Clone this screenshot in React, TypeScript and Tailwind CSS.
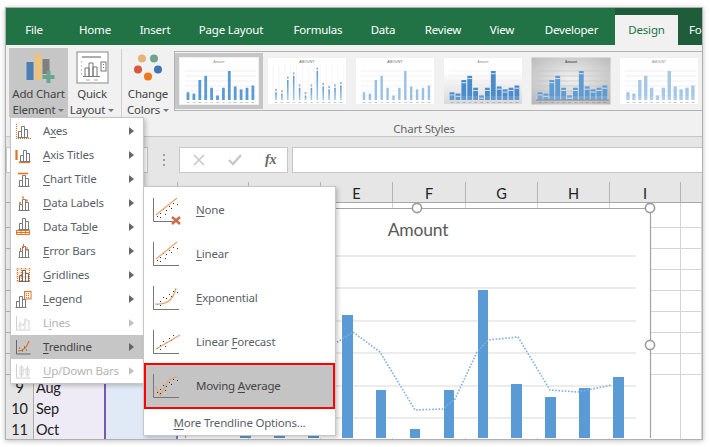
import React from "react";

const ORANGE = "#e8701f";
const GREY = "#7a7a7a";
const MONTHS = ["Jan", "Feb", "Mar", "Apr", "May", "Jun", "Jul", "Aug", "Sep", "Oct", "Nov", "Dec"];
const DATA = [24, 20, 62, 75, 38, 14, 38, 90, 42, 33, 38, 45];

function Bars({ c = GREY }: { c?: string }) {
  return <path d="M3.5 14.5V8.5h3v6M6.5 8.5V3.5h3v11M9.5 6.5h3v8M2.5 14.5h11" fill="none" stroke={c} strokeWidth="1" />;
}

function MenuIcon({ name, disabled }: { name: string; disabled?: boolean }) {
  const inner: Record<string, React.ReactNode> = {
    axes: (
      <>
        <Bars />
        <path d="M1.5 1v14M1 15.5h15" stroke={ORANGE} strokeWidth="1.2" strokeDasharray="1 1" fill="none" />
      </>
    ),
    titles: (
      <>
        <g transform="translate(2 0)"><Bars /></g>
        <path d="M1.5 3v10" stroke={ORANGE} strokeWidth="2.2" />
        <path d="M4 15.5h11" stroke={ORANGE} strokeWidth="1.2" />
      </>
    ),
    title: (
      <>
        <g transform="translate(1 1)"><Bars /></g>
        <path d="M3 2.5h10" stroke={ORANGE} strokeWidth="1.6" />
      </>
    ),
    labels: (
      <>
        <g transform="translate(1 1)"><Bars /></g>
        <path d="M5 7v2M8 1.5v2M12 4.5v2" stroke={ORANGE} strokeWidth="1.6" />
      </>
    ),
    table: (
      <>
        <g transform="translate(1 -4)"><Bars /></g>
        <path d="M1.5 11.5h13v4h-13zM1.5 13.5h13M6 11.5v4M10.5 11.5v4" fill="none" stroke={ORANGE} strokeWidth="1" />
      </>
    ),
    error: (
      <>
        <g transform="translate(1 0)"><Bars /></g>
        <path d="M5.5 5v4M8.5 1v4M12 4v4" stroke={ORANGE} strokeWidth="1" />
      </>
    ),
    grid: (
      <>
        <path d="M1.5 2h13M1.5 6h13M1.5 10h13M1.5 14h13M2.5 1v14M6.5 1v14M10.5 1v14M14.5 1v14" stroke={ORANGE} strokeWidth="1" strokeDasharray="1 1" fill="none" />
        <g transform="translate(1 0)"><Bars c="#6a6a6a" /></g>
      </>
    ),
    legend: (
      <>
        <g transform="translate(-2 2)"><Bars /></g>
        <rect x="9.5" y="0.5" width="6.5" height="7.5" fill="#fff" stroke={ORANGE} />
        <path d="M11 2.5h3.5M11 4.5h3.5M11 6.5h3.5" stroke={ORANGE} strokeWidth="1" strokeDasharray="1 1" />
      </>
    ),
    lines: (
      <>
        <path d="M1.5 1v14h14" fill="none" stroke="#c4c4c4" />
        <path d="M3 12l3-4 2 3 3-7 3 4M5 6v8M10 3v11M14 5v9" fill="none" stroke="#cfcfcf" />
      </>
    ),
    trend: (
      <>
        <path d="M1.5 1v14h14" fill="none" stroke="#666" />
        <path d="M3 12c6 0 9-4 11-10" fill="none" stroke={ORANGE} strokeWidth="1.2" />
        <path d="M4 9h1M7 12h1M9 8h1M11 11h1" stroke="#444" strokeDasharray="1 1" />
      </>
    ),
    updown: (
      <>
        <path d="M1.5 1v14h14" fill="none" stroke="#c4c4c4" />
        <path d="M5 4h3v8H5zM11 6h3v6h-3zM6.5 2v12M12.5 3v11M7 8l5-3" fill="none" stroke="#cfcfcf" />
      </>
    ),
  };
  return (
    <svg width="16" height="16" viewBox="0 0 16 16" className={`shrink-0 overflow-visible ${disabled ? "opacity-80" : ""}`}>
      {inner[name]}
    </svg>
  );
}

function MenuItem({ icon, pre, u, post, disabled, active }: { icon: string; pre?: string; u: string; post?: string; disabled?: boolean; active?: boolean }) {
  return (
    <div className={`h-[24px] flex items-center pl-[4px] pr-[9px] ${active ? "bg-[#c6c6c6] text-[#444]" : ""} ${disabled ? "text-[#b4b4b4]" : active ? "" : "text-[#5a5f69]"}`}>
      <MenuIcon name={icon} disabled={disabled} />
      <span className="ml-[12px] whitespace-nowrap">
        {pre}
        <u className="underline-offset-2">{u}</u>
        {post}
      </span>
      <svg width="5" height="8" viewBox="0 0 5 8" className="ml-auto">
        <path d="M0 0l5 4-5 4z" fill={disabled ? "#c0c0c0" : "#666"} />
      </svg>
    </div>
  );
}

function Dots({ pts }: { pts: number[][] }) {
  return (
    <>
      {pts.map(([x, y], i) => (
        <rect key={i} x={x} y={y} width="1" height="1" fill="#333" />
      ))}
    </>
  );
}

function TrendIcon({ kind }: { kind: string }) {
  const axis = <path d="M0.5 0v23.5H26" fill="none" stroke="#777" />;
  const dots = <Dots pts={[[4, 18], [7, 15], [10, 11], [13, 12], [16, 8], [18, 10], [20, 5], [24, 6], [7, 19], [12, 16]]} />;
  let line: React.ReactNode = null;
  if (kind === "none" || kind === "linear") line = <path d="M3 17L24 0" stroke="#e9a36f" strokeWidth="1.2" />;
  if (kind === "exp") line = <path d="M2 18c10 1 18-2 21-16" fill="none" stroke="#e9a36f" strokeWidth="1.2" />;
  if (kind === "forecast") line = <path d="M3 19L27 5" stroke="#e9a36f" strokeWidth="1.2" />;
  if (kind === "moving") line = <path d="M2 12L7.5 22L15 6.5L24 2" fill="none" stroke="#e9a36f" strokeWidth="1.2" />;
  return (
    <svg width="28" height="24" viewBox="0 0 28 24" className="shrink-0 overflow-visible">
      {axis}
      {dots}
      {line}
      {kind === "none" && <path d="M19 19l8 7M27 19l-8 7" stroke="#cf6a4a" strokeWidth="2.4" />}
    </svg>
  );
}

function TrendItem({ kind, pre, u, post, boxed }: { kind: string; pre?: string; u: string; post?: string; boxed?: boolean }) {
  return (
    <div className={`flex items-center ${boxed ? "bg-[#c4c4c4] border-2 border-[#ff0000] text-[#444] -mt-px h-[46px] pl-[7px]" : "h-[44px] pl-[9px] text-[#5a5f69]"}`}>
      <TrendIcon kind={kind} />
      <span className="ml-[15px] whitespace-nowrap">
        {pre}
        <u className="underline-offset-2">{u}</u>
        {post}
      </span>
    </div>
  );
}

function Caret() {
  return (
    <svg width="6" height="3" viewBox="0 0 6 3" className="inline-block ml-[3px] align-middle">
      <path d="M0 0h6L3 3z" fill="#777" />
    </svg>
  );
}

function ThumbChart({ v }: { v: number }) {
  const bx = (i: number) => 9 + i * 5.9;
  const base = 43;
  const wide = v >= 4;
  const titleFill = v === 5 || v === 2 || v === 3 ? "#555" : "#888";
  return (
    <svg width="80" height="48" viewBox="0 0 80 48" className="block shrink-0">
      <defs>
        <linearGradient id="tg4" x1="0" x2="0" y1="0" y2="1">
          <stop offset="0.3" stopColor="#ffffff" />
          <stop offset="1" stopColor="#d8d8d8" />
        </linearGradient>
        <radialGradient id="tg5" cx="0.5" cy="0.45" r="0.7">
          <stop offset="0" stopColor="#f2f2f2" />
          <stop offset="1" stopColor="#b8b8b8" />
        </radialGradient>
        <linearGradient id="bar2" x1="0" x2="0" y1="0" y2="1">
          <stop offset="0" stopColor="#5b9bd5" />
          <stop offset="1" stopColor="#a9cbe9" />
        </linearGradient>
      </defs>
      <rect x="0.5" y="0.5" width="79" height="47" fill={v === 4 ? "url(#tg4)" : v === 5 ? "url(#tg5)" : "#fff"} stroke={v === 5 ? "none" : "#f0f0f0"} />
      <text x="40" y="5.5" fontSize="3.2" textAnchor="middle" fill={titleFill} fontFamily="Liberation Sans" fontWeight={v === 5 ? 700 : 400} letterSpacing={v === 2 || v === 3 ? 0.3 : 0}>
        {v === 2 || v === 3 || v === 6 ? "AMOUNT" : "Amount"}
      </text>
      {v !== 2 &&
        [14, 19, 24, 29, 34, 39].map((y) => <path key={y} d={`M6 ${y}H77`} stroke={v === 4 ? "#ededed" : v === 5 ? "#c4c4c4" : "#e8e8e8"} strokeWidth="0.7" />)}
      {v === 2 && Array.from({ length: 13 }).map((_, i) => <path key={i} d={`M${bx(i) - 3} 8V43`} stroke="#efefef" strokeWidth="0.6" />)}
      {DATA.map((d, i) => {
        const h = (d / 90) * 29;
        const y = base - h;
        if (v === 1) return <rect key={i} x={bx(i) - 1.4} y={y} width="2.8" height={h} fill="#5b9bd5" />;
        if (v === 2)
          return (
            <g key={i}>
              <rect x={bx(i) - 0.8} y={y} width="1.6" height={h} fill="url(#bar2)" />
              <rect x={bx(i) - 0.8} y={y - 3.5} width="1.6" height="2.2" fill="#aaa" />
            </g>
          );
        if (v === 3) return <rect key={i} x={bx(i) - 1.2} y={y} width="2.4" height={h} fill="#6ea5da" />;
        if (v === 6) return <rect key={i} x={bx(i) - 1.7} y={y} width="3.4" height={h} fill="#a6c8e8" />;
        return (
          <g key={i}>
            <rect x={bx(i) - 2.4} y={y} width="4.8" height={h} fill={v === 4 ? "#4a8ccb" : "#5f9bd3"} />
            <rect x={bx(i) - 2.4} y={y + 2.2} width="4.8" height="1" fill="#d5e4f3" />
          </g>
        );
      })}
      {v === 3 && [10, 12, 14, 16, 18, 20, 22, 24, 26, 28, 30, 32, 34, 36, 38, 40, 42].map((y) => <path key={y} d={`M7 ${y}H77`} stroke="#fff" strokeWidth="0.6" />)}
      {v === 5 && <path d="M5 43H78" stroke="#777" strokeWidth="0.8" />}
      {wide && <rect x="5" y="39" width="73" height="4" fill="#fff" opacity="0.12" />}
      {MONTHS.map((m, i) => (
        <text key={m} x={bx(i)} y="46" fontSize="1.9" textAnchor="middle" fill="#777" fontFamily="Liberation Sans">
          {m}
        </text>
      ))}
    </svg>
  );
}

function MainChart() {
  const bars = [
    [240, 251, 436], [274, 285, 436], [308, 319, 436], [342, 353, 316], [376, 386, 391], [410, 420, 430],
    [444, 454, 391], [478, 488, 291], [511, 522, 385], [545, 556, 398], [579, 590, 389], [613, 624, 378],
  ];
  const grid = [257, 289, 322, 354, 387, 419];
  return (
    <svg width="466" height="230" viewBox="185 209 466 230" className="absolute inset-0 overflow-visible">
      {grid.map((y) => (
        <path key={y} d={`M205 ${y}H636`} stroke="#d9d9d9" strokeWidth="1" />
      ))}
      {bars.map(([a, b, t], i) => (
        <rect key={i} x={a} y={t} width={b - a} height={439 - t} fill="#5b9bd5" />
      ))}
      <polyline
        points="305,370 336,344 353,333 380,353 415,411 443,410 455,400 477,353 488,341 518,338 550,391 578,393 612,386"
        fill="none"
        stroke="#7db0e0"
        strokeWidth="1.6"
        strokeDasharray="1.6 1.6"
      />
      <path d="M185.5 439V209.5H650.5V439" fill="none" stroke="#a3a3a3" strokeWidth="1.2" />
      {[[417, 209], [650, 209], [650, 346]].map(([x, y]) => (
        <circle key={`${x}${y}`} cx={x} cy={y} r="4.6" fill="#fff" stroke="#9a9a9a" strokeWidth="1.6" />
      ))}
    </svg>
  );
}

function Sheet() {
  const cols = ["C", "D", "E", "F", "G", "H", "I", "J"];
  const rows = ["", "", "", "", "", "", "", "", "Aug", "Sep", "Oct"];
  return (
    <div className="relative flex-1 overflow-hidden font-['Lato','Carlito',sans-serif] text-[14.5px] text-[#222]">
      {rows.map((m, r) => (
        <div key={r} className={`grid grid-cols-[28px_72px_72px_71px_72px_72px_73px_72px_72px_71px_1fr] ${r === 0 ? "h-[25px]" : "h-[21px]"}`}>
          <div className="bg-[#e6e6e6] border-r border-b border-[#ababab] flex items-center justify-center pt-[2px]">{m ? r + 1 : ""}</div>
          <div className="bg-[#efebf6] border-b border-[#d4d0dc] border-r-2 border-r-[#7b57b0] pl-[2px] pt-[2px] flex items-center">{m}</div>
          <div className="bg-[#e0e9f6] border-b border-[#ccd5e2] border-r-2 border-r-[#5f8fd0]" />
          {cols.map((c) => (
            <div key={c} className="bg-white border-r border-b border-[#d4d4d4]" />
          ))}
        </div>
      ))}
      <div className="absolute left-[179px] top-[5px] w-[466px] h-[230px] bg-white">
        <MainChart />
        <div className="absolute left-0 right-0 top-[10px] text-center font-['Lato',sans-serif] text-[17.5px] leading-[24px] text-[#595959]">Amount</div>
      </div>
    </div>
  );
}

export default function App() {
  const tabs: [string, number][] = [
    ["File", 56], ["Home", 66], ["Insert", 54], ["Page Layout", 98], ["Formulas", 76],
    ["Data", 54], ["Review", 66], ["View", 52], ["Developer", 87],
  ];
  const colsHead: [string, number][] = [
    ["", 28], ["", 72], ["", 72], ["", 71], ["", 72], ["E", 72], ["F", 73], ["G", 72], ["H", 72], ["I", 71],
  ];
  return (
    <div className="w-[710px] h-[447px] bg-white pl-[5px] pt-[7px] overflow-hidden font-['Noto_Sans','Open_Sans',sans-serif] text-[11.5px] tracking-[-0.2px]">
      <div className="relative w-[698px] h-[433px] border border-[#b0b0b0] shadow-[0_1px_5px_rgba(0,0,0,0.25)] flex flex-col overflow-hidden bg-[#f1f1f1]">
        {/* tab strip */}
        <div className="h-[37px] bg-[#217346] flex items-end text-white shrink-0">
          {tabs.map(([t, w]) => (
            <div key={t} style={{ width: w }} className="h-[30px] flex items-center justify-center shrink-0">{t}</div>
          ))}
          <div className="w-[63px] h-[30px] shrink-0 bg-[#f1f1f1] text-[#217346] flex items-center justify-center relative">
            Design
            <div className="absolute left-0 right-0 -top-[7px] h-[7px] bg-[#1e5c3a]" />
          </div>
          <div className="flex-1 h-[37px] bg-[#1e5c3a] pt-[7px] overflow-hidden">
            <div className="h-[30px] flex items-center pl-[11px] whitespace-nowrap">Format</div>
          </div>
        </div>

        {/* ribbon */}
        <div className="h-[92px] shrink-0 bg-[#f1f1f1] border-b border-[#c6c6c6] flex text-[#444] leading-[16px]">
          <div className="ml-[3px] mt-[3px] w-[59px] h-[69px] bg-[#c6c6c6] flex flex-col items-center pt-[6px]">
            <svg width="30" height="30" viewBox="0 0 30 30" className="overflow-visible">
              <rect x="2.5" y="8" width="7" height="18" fill="#4a7fb5" />
              <rect x="10.5" y="0" width="7" height="26" fill="#eac47e" />
              <rect x="18.5" y="5" width="7" height="15" fill="#7f7f7f" />
              <rect x="22.5" y="17" width="4" height="12" fill="#6aa592" />
              <rect x="18.5" y="21" width="12" height="4" fill="#6aa592" />
            </svg>
            <div className="mt-[2px] whitespace-nowrap">Add Chart</div>
            <div className="whitespace-nowrap">Element<Caret /></div>
          </div>
          <div className="w-[48px] flex flex-col items-center pt-[6px]">
            <svg width="33" height="33" viewBox="0 0 33 33">
              <rect x="1" y="1" width="31" height="31" fill="#fff" stroke="#a8a8a8" strokeWidth="1.4" />
              <path d="M6 6h19" stroke="#9a9a9a" strokeWidth="1.6" />
              <path d="M5 11h1M5 15h1M5 19h1M5 23h1" stroke="#888" />
              <path d="M7 25.5h17M9 25V17h4v8M13 25V12h4v13M17 25v-9h4v9" fill="none" stroke="#777" />
              <rect x="25" y="11" width="5" height="9" fill="none" stroke="#777" />
              <path d="M27 13.5h1M27 16.5h1" stroke="#777" />
              <path d="M10 29h4M18 29h4" stroke="#aaa" />
            </svg>
            <div className="mt-[2px] whitespace-nowrap">Quick</div>
            <div className="whitespace-nowrap">Layout<Caret /></div>
          </div>
          <div className="w-px h-[71px] mt-[4px] ml-[5px] bg-[#d0d0d0]" />
          <div className="w-[52px] flex flex-col items-center pt-[9px]">
            <svg width="30" height="30" viewBox="0 0 30 30">
              <circle cx="9" cy="4.5" r="4" fill="#e6b474" />
              <circle cx="21" cy="4.5" r="4" fill="#6fa58f" />
              <circle cx="5" cy="15.5" r="4" fill="#d9573c" />
              <circle cx="25" cy="15.5" r="4" fill="#3f74b5" />
              <circle cx="15" cy="22.5" r="4" fill="#ec7a1c" />
            </svg>
            <div className="mt-[2px] whitespace-nowrap">Change</div>
            <div className="whitespace-nowrap">Colors<Caret /></div>
          </div>
          <div className="flex-1 flex flex-col min-w-0">
            <div className="mt-[6px] h-[60px] border-y border-l border-[#b4b4b4] flex items-center overflow-hidden shrink-0">
              <div className="w-[88px] h-[56px] bg-[#c6c6c6] flex items-center justify-center shrink-0">
                <ThumbChart v={1} />
              </div>
              <div className="ml-[4px] flex gap-2">
                {[2, 3, 4, 5, 6].map((v) => <ThumbChart key={v} v={v} />)}
              </div>
            </div>
            <div className="pt-[10px] pr-[28px] text-center text-[#666]">Chart Styles</div>
          </div>
        </div>

        {/* formula bar */}
        <div className="h-[36px] shrink-0 bg-[#e6e6e6] pt-[10px] flex items-start">
          <div className="w-[142px] h-[26px] bg-white border border-[#c6c6c6] shrink-0" />
          <div className="w-[31px] h-[26px] flex flex-col items-center justify-center gap-[3px] shrink-0">
            <div className="w-[2px] h-[2px] bg-[#a0a0a0]" />
            <div className="w-[2px] h-[2px] bg-[#a0a0a0]" />
            <div className="w-[2px] h-[2px] bg-[#a0a0a0]" />
          </div>
          <div className="w-[109px] h-[26px] bg-white border border-[#c6c6c6] shrink-0 flex items-center pl-[13px]">
            <svg width="12" height="12" viewBox="0 0 12 12"><path d="M1 1l10 10M11 1L1 11" stroke="#c8c8c8" strokeWidth="1.6" /></svg>
            <svg width="14" height="12" viewBox="0 0 14 12" className="ml-[23px]"><path d="M1 6l4 4 8-9" fill="none" stroke="#c8c8c8" strokeWidth="2.4" /></svg>
            <span className="ml-[23px] font-['Liberation_Serif',serif] italic font-bold text-[14px] leading-none text-[#666]">fx</span>
          </div>
          <div className="flex-1 h-[26px] ml-[4px] bg-white border-y border-l border-[#c6c6c6]" />
        </div>

        {/* column headers */}
        <div className="h-[30px] shrink-0 bg-[#e6e6e6] flex items-end border-b border-[#a8a8a8] font-['Lato',sans-serif] text-[14.5px] tracking-normal text-[#222]">
          {colsHead.map(([c, w], i) => (
            <div key={i} style={{ width: w }} className="h-[20px] shrink-0 border-r border-[#b4b4b4] flex items-center justify-center pt-[3px]">{c}</div>
          ))}
        </div>

        <Sheet />

        {/* add chart element menu */}
        <div className="absolute left-[4px] top-[109px] w-[134px] h-[267px] bg-white border border-[#c6c6c6] shadow-[2px_2px_4px_rgba(0,0,0,0.2)] pt-[1px]">
          <MenuItem icon="axes" pre="A" u="x" post="es" />
          <MenuItem icon="titles" u="A" post="xis Titles" />
          <MenuItem icon="title" u="C" post="hart Title" />
          <MenuItem icon="labels" u="D" post="ata Labels" />
          <MenuItem icon="table" pre="Data Ta" u="b" post="le" />
          <MenuItem icon="error" u="E" post="rror Bars" />
          <MenuItem icon="grid" u="G" post="ridlines" />
          <MenuItem icon="legend" u="L" post="egend" />
          <MenuItem icon="lines" pre="L" u="i" post="nes" disabled />
          <MenuItem icon="trend" u="T" post="rendline" active />
          <MenuItem icon="updown" u="U" post="p/Down Bars" disabled />
        </div>

        {/* trendline submenu */}
        <div className="absolute left-[137px] top-[178px] w-[193px] h-[250px] bg-white border border-[#c6c6c6] shadow-[2px_2px_4px_rgba(0,0,0,0.2)] pt-[1px]">
          <TrendItem kind="none" u="N" post="one" />
          <TrendItem kind="linear" u="L" post="inear" />
          <TrendItem kind="exp" u="E" post="xponential" />
          <TrendItem kind="forecast" pre="Linear " u="F" post="orecast" />
          <TrendItem kind="moving" pre="Moving " u="A" post="verage" boxed />
          <div className="h-[27px] flex items-center justify-center text-[#5a5f69]">
            <span><u className="underline-offset-2">M</u>ore Trendline Options...</span>
          </div>
        </div>
      </div>
    </div>
  );
}
